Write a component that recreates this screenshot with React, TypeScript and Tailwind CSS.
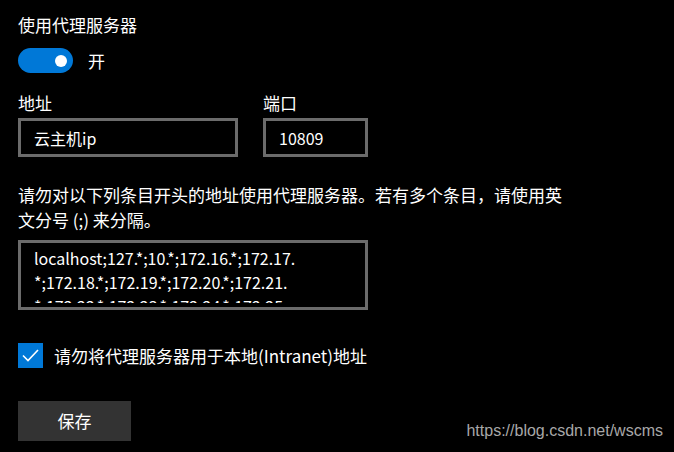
import { useState } from "react";

const font = { fontFamily: '"Noto Sans CJK SC", "Noto Sans", sans-serif' };

const bypassLines = [
  "localhost;127.*;10.*;172.16.*;172.17.",
  "*;172.18.*;172.19.*;172.20.*;172.21.",
  "*;172.22.*;172.23.*;172.24.*;172.25.",
];

export default function App() {
  const [enabled, setEnabled] = useState(true);
  const [local, setLocal] = useState(true);

  return (
    <div
      className="relative w-[674px] h-[452px] bg-black text-white overflow-hidden pl-[18px] pt-[12px]"
      style={font}
    >
      {/* Title + toggle */}
      <div className="text-[17px] leading-[26px]">使用代理服务器</div>
      <div className="mt-[10px] flex items-center gap-[15px]">
        <button
          onClick={() => setEnabled(!enabled)}
          className={`w-[55px] h-[25px] rounded-full flex items-center px-[6px] ${
            enabled ? "bg-[#0078d7] justify-end" : "bg-transparent border-2 border-white justify-start"
          }`}
        >
          <span className="w-[12px] h-[12px] rounded-full bg-white" />
        </button>
        <span className="text-[17px] leading-[25px]">{enabled ? "开" : "关"}</span>
      </div>

      {/* Address + port */}
      <div className="mt-[20px] flex gap-[25px]">
        <div className="flex flex-col">
          <label className="text-[17px] leading-[20px]">地址</label>
          <div className="mt-[5px] w-[220px] h-[39px] border-[3px] border-[#6b6b6b] flex items-center pl-[13px] text-[16px]">
            云主机ip
          </div>
        </div>
        <div className="flex flex-col">
          <label className="text-[17px] leading-[20px]">端口</label>
          <div className="mt-[5px] w-[105px] h-[39px] border-[3px] border-[#6b6b6b] flex items-center pl-[13px] text-[16px]">
            10809
          </div>
        </div>
      </div>

      {/* Exceptions */}
      <div className="mt-[25px] text-[17px] leading-[25px]">
        <div>请勿对以下列条目开头的地址使用代理服务器。若有多个条目，请使用英</div>
        <div>文分号 (;) 来分隔。</div>
      </div>
      <div className="mt-[8px] w-[350px] h-[70px] border-[3px] border-[#6b6b6b] px-[13px] pt-[3px] pb-[4px]">
        <div className="h-full overflow-hidden text-[16px] leading-[24px]">
          {bypassLines.map((l) => (
            <div key={l} className="whitespace-nowrap">
              {l}
            </div>
          ))}
        </div>
      </div>

      {/* Local checkbox */}
      <div className="mt-[33px] flex items-center gap-[11px]">
        <button
          onClick={() => setLocal(!local)}
          className={`w-[25px] h-[25px] flex items-center justify-center ${
            local ? "bg-[#0078d7]" : "border-2 border-white"
          }`}
        >
          {local && (
            <svg width="17" height="13" viewBox="0 0 17 13" fill="none">
              <path d="M1 6.5 L6 11.5 L16 1" stroke="white" strokeWidth="1.6" />
            </svg>
          )}
        </button>
        <span className="text-[17px]">请勿将代理服务器用于本地(Intranet)地址</span>
      </div>

      {/* Save */}
      <button className="mt-[32px] w-[113px] h-[40px] bg-[#333333] text-[17px] text-white">
        保存
      </button>

      <div
        className="absolute right-[11px] bottom-[12px] text-[16px] leading-[18px] text-[#a8a8a8]"
        style={{ fontFamily: '"Liberation Sans", sans-serif' }}
      >
        https://blog.csdn.net/wscms
      </div>
    </div>
  );
}
